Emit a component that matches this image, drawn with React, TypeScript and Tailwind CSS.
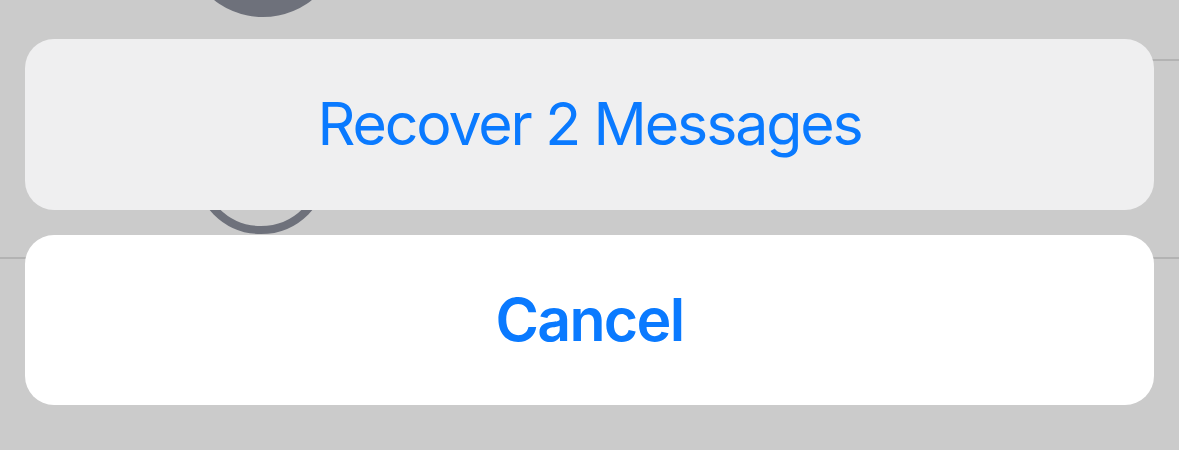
export default function App() {
  return (
    <div
      className="relative h-[450px] w-[1179px] overflow-hidden bg-[#cbcbcb]"
      style={{ fontFamily: "Inter, 'Noto Sans', sans-serif" }}
    >
      {/* list behind the sheet */}
      <div className="absolute left-[184px] top-[-141px] h-[158px] w-[158px] rounded-full bg-[#6e717b]" />
      <div className="absolute left-[194px] top-[100px] h-[134px] w-[134px] rounded-full border-[8px] border-[#6e717b]" />
      <div className="absolute left-[340px] right-0 top-[59px] h-[1.5px] bg-[#b3b3b3]" />
      <div className="absolute left-0 right-0 top-[257px] h-[1.5px] bg-[#b3b3b3]" />

      {/* action sheet */}
      <div className="absolute inset-x-[25px] top-[39px] flex flex-col gap-[25px]">
        <button className="flex h-[171px] items-center justify-center rounded-[29px] bg-[#efeff0] text-[59px] font-normal tracking-[-2.1px] text-[#0a7aff]">
          Recover 2 Messages
        </button>
        <button className="flex h-[170px] items-center justify-center rounded-[29px] bg-white text-[59px] font-semibold tracking-[-1.7px] text-[#0a7aff]">
          Cancel
        </button>
      </div>
    </div>
  );
}
